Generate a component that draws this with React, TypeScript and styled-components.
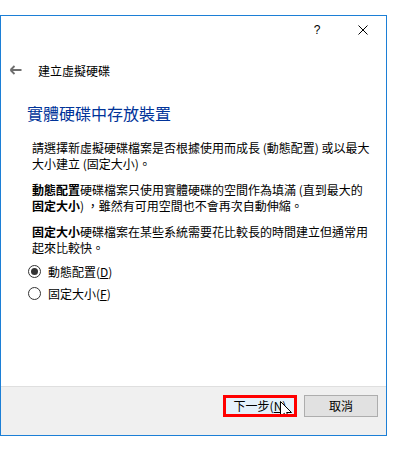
import React from "react";
import styled, { createGlobalStyle } from "styled-components";

const GlobalStyle = createGlobalStyle`
  body {
    margin: 0;
    background: #ffffff;
    font-family: "Noto Sans CJK TC", "Liberation Sans", sans-serif;
    color: #000000;
  }
`;

const Page = styled.div`
  width: 404px;
  height: 451px;
  padding-top: 15px;
  box-sizing: border-box;
  background: #ffffff;
`;

const Window = styled.div`
  width: 387px;
  height: 421px;
  box-sizing: border-box;
  border: 1px solid #1c7fd6;
  background: #ffffff;
  display: flex;
  flex-direction: column;
`;

const TitleBar = styled.div`
  height: 27px;
  display: flex;
  justify-content: flex-end;
`;

const TitleButton = styled.div`
  width: 46px;
  display: flex;
  align-items: center;
  justify-content: center;
  font-family: "Liberation Sans", sans-serif;
  font-size: 12px;
  color: #000000;
`;

const NavRow = styled.div`
  margin-top: 17px;
  height: 20px;
  padding-left: 8px;
  display: flex;
  align-items: center;
  gap: 16px;
  font-size: 12px;
`;

const Content = styled.div`
  padding-left: 26px;
`;

const Heading = styled.h1`
  margin: 22px 0 0;
  font-size: 16px;
  line-height: 22px;
  font-weight: normal;
  color: #003399;
`;

const Body = styled.div`
  margin-top: 16px;
  padding-left: 5px;
  font-size: 12px;
  line-height: 16px;
  white-space: nowrap;
`;

const Paragraph = styled.p`
  margin: 0 0 10px;

  &:last-child {
    margin-bottom: 0;
  }
`;

const RadioGroup = styled.div`
  margin-top: 4px;
  padding-left: 1px;
  display: flex;
  flex-direction: column;
`;

const RadioRow = styled.label`
  height: 22px;
  display: flex;
  align-items: center;
  gap: 7px;
  font-size: 12px;
`;

const RadioCircle = styled.span<{ $checked?: boolean }>`
  width: 13px;
  height: 13px;
  box-sizing: border-box;
  border: 1px solid #333333;
  border-radius: 50%;
  background: #ffffff;
  display: flex;
  align-items: center;
  justify-content: center;

  &::after {
    content: "";
    width: 7px;
    height: 7px;
    border-radius: 50%;
    background: #333333;
    display: ${(p) => (p.$checked ? "block" : "none")};
  }
`;

const Footer = styled.div`
  margin-top: auto;
  height: 40px;
  border-top: 1px solid #dfdfdf;
  background: #f0f0f0;
  display: flex;
  justify-content: flex-end;
  align-items: flex-start;
  gap: 7px;
  padding: 8px 8px 0 0;
`;

const Button = styled.button<{ $primary?: boolean }>`
  position: relative;
  overflow: hidden;
  width: 74px;
  height: 22px;
  box-sizing: border-box;
  padding: 0;
  font-family: "Noto Sans CJK TC", sans-serif;
  font-size: 12px;
  line-height: 1;
  color: #000000;
  background: ${(p) => (p.$primary ? "#e5f1fb" : "#e1e1e1")};
  border: ${(p) => (p.$primary ? "3px solid #ff0000" : "1px solid #adadad")};
  display: flex;
  align-items: center;
  justify-content: center;
`;

const Cursor = styled.svg`
  position: absolute;
  left: 54px;
  top: 3px;
`;

const BackArrow = () => (
  <svg width="13" height="10" viewBox="0 0 13 10">
    <path
      d="M1.5 5 H12.5 M1.5 5 L5.5 1 M1.5 5 L5.5 9"
      stroke="#6e6e6e"
      strokeWidth="1.8"
      fill="none"
    />
  </svg>
);

const CloseIcon = () => (
  <svg width="10" height="10" viewBox="0 0 10 10">
    <path d="M0.5 0.5 L9.5 9.5 M9.5 0.5 L0.5 9.5" stroke="#000" strokeWidth="1" fill="none" />
  </svg>
);

const App = () => {
  return (
    <Page>
      <GlobalStyle />
      <Window>
        <TitleBar>
          <TitleButton>?</TitleButton>
          <TitleButton>
            <CloseIcon />
          </TitleButton>
        </TitleBar>
        <NavRow>
          <BackArrow />
          <span>建立虛擬硬碟</span>
        </NavRow>
        <Content>
          <Heading>實體硬碟中存放裝置</Heading>
          <Body>
            <Paragraph>
              請選擇新虛擬硬碟檔案是否根據使用而成長 (動態配置) 或以最大
              <br />
              大小建立 (固定大小)。
            </Paragraph>
            <Paragraph>
              <b>動態配置</b>硬碟檔案只使用實體硬碟的空間作為填滿 (直到最大的
              <br />
              <b>固定大小</b>) ，雖然有可用空間也不會再次自動伸縮。
            </Paragraph>
            <Paragraph>
              <b>固定大小</b>硬碟檔案在某些系統需要花比較長的時間建立但通常用
              <br />
              起來比較快。
            </Paragraph>
          </Body>
          <RadioGroup>
            <RadioRow>
              <RadioCircle $checked />
              <span>
                動態配置(<u>D</u>)
              </span>
            </RadioRow>
            <RadioRow>
              <RadioCircle />
              <span>
                固定大小(<u>F</u>)
              </span>
            </RadioRow>
          </RadioGroup>
        </Content>
        <Footer>
          <Button $primary>
            下一步(<u>N</u>)
            <Cursor width="12" height="19" viewBox="0 0 12 19">
              <path
                d="M0.5 0.5 L0.5 16 L4.3 12.3 L6.8 18 L9 17 L6.6 11.5 L11.5 11.5 Z"
                fill="#ffffff"
                stroke="#000000"
                strokeWidth="1"
              />
            </Cursor>
          </Button>
          <Button>取消</Button>
        </Footer>
      </Window>
    </Page>
  );
};

export default App;
